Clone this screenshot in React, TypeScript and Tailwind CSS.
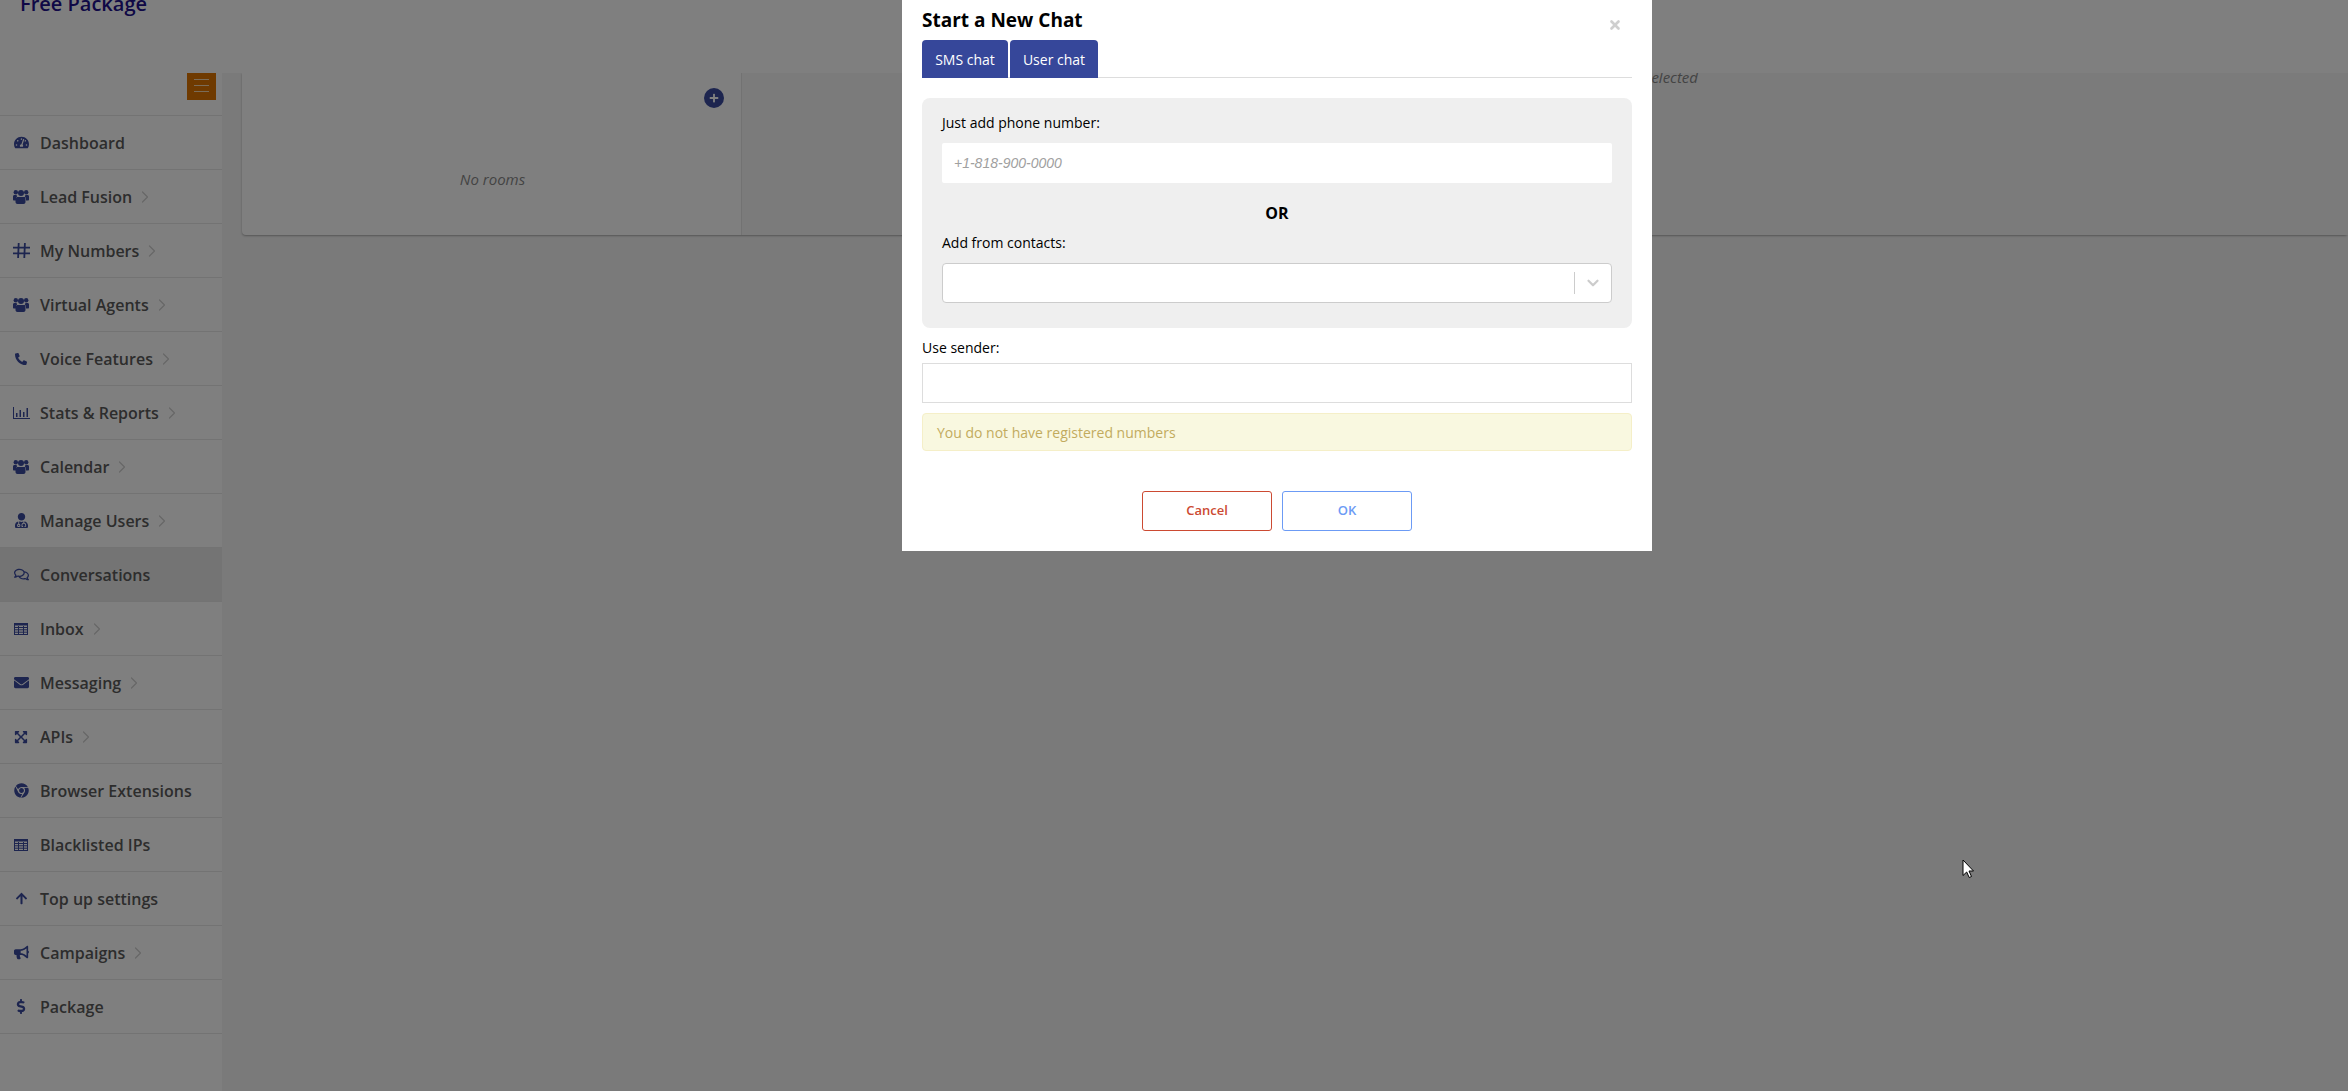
import React from "react";
import { FaTachometerAlt, FaPhoneAlt, FaUserMd, FaRegComments, FaEnvelope, FaExpandArrowsAlt, FaChrome, FaArrowUp, FaBullhorn, FaDollarSign, FaPlus } from "react-icons/fa";
import { ChevronRight, ChevronDown, X } from "lucide-react";

type IconProps = { className?: string };

const Bars = ({ className }: IconProps) => (
  <svg viewBox="0 0 17 12" className={className} fill="currentColor">
    <path d="M0 0h1v11h17v1H0z" />
    <path d="M3 6h1.500v4H3zM6.500 3h1.500v7H6.500zM10 5h1.500v5H10zM13.500 1h1.500v9h-1.500z" />
  </svg>
);

const People = ({ className }: IconProps) => (
  <svg viewBox="0 0 16 15" className={className} fill="currentColor">
    <circle cx="2.800" cy="3.200" r="2.200" />
    <circle cx="13.200" cy="3.200" r="2.200" />
    <circle cx="8" cy="4" r="3" />
    <path d="M0 7.500c0-1 .7-1.500 1.500-1.500h2.300c-.3.800 0 1.500.5 2-1 .3-1.300 1-1.300 2v1.500H1c-.6 0-1-.4-1-1z" />
    <path d="M16 7.500c0-1-.7-1.500-1.500-1.500h-2.300c.3.800 0 1.500-.5 2 1 .3 1.300 1 1.300 2v1.500H15c.6 0 1-.4 1-1z" />
    <path d="M4.800 8h6.400c.8 0 1.300.6 1.300 1.500V13c0 1.200-.8 2-2 2h-6c-1.200 0-2-.8-2-2V9.500C3.500 8.600 4 8 4.800 8z" />
  </svg>
);

const HashMark = ({ className }: IconProps) => (
  <svg viewBox="0 0 17 15" className={className} fill="currentColor">
    <path d="M4.800 0h1.800L6 15H4.200zM11 0h1.800l-.6 15h-1.800z" />
    <path d="M0 3.800h17v1.700H0zM0 9.500h17v1.700H0z" />
  </svg>
);

const Grid = ({ className }: IconProps) => (
  <svg viewBox="0 0 14 12" className={className} fill="none" stroke="currentColor" strokeWidth="1">
    <rect x="0.500" y="0.500" width="13" height="11" strokeWidth="1" />
    <path d="M0 1.500h14" strokeWidth="2" />
    <path d="M0 4.500h14M0 6.800h14M0 9.200h14M4.500 3v9M9.500 3v9" />
  </svg>
);

const items: [string, React.ComponentType<IconProps>, boolean, string][] = [
  ["Dashboard", FaTachometerAlt, false, "w-[15px] h-[15px]"],
  ["Lead Fusion", People, true, "w-[16px] h-[15px]"],
  ["My Numbers", HashMark, true, "w-[17px] h-[15px]"],
  ["Virtual Agents", People, true, "w-[16px] h-[15px]"],
  ["Voice Features", FaPhoneAlt, true, "w-[12px] h-[12px]"],
  ["Stats & Reports", Bars, true, "w-[17px] h-[12px]"],
  ["Calendar", People, true, "w-[16px] h-[15px]"],
  ["Manage Users", FaUserMd, true, "w-[13px] h-[15px]"],
  ["Conversations", FaRegComments, false, "w-[15px] h-[15px]"],
  ["Inbox", Grid, true, "w-[14px] h-[12px]"],
  ["Messaging", FaEnvelope, true, "w-[15px] h-[15px]"],
  ["APIs", FaExpandArrowsAlt, true, "w-[14px] h-[14px]"],
  ["Browser Extensions", FaChrome, false, "w-[15px] h-[15px]"],
  ["Blacklisted IPs", Grid, false, "w-[14px] h-[12px]"],
  ["Top up settings", FaArrowUp, false, "w-[13px] h-[13px]"],
  ["Campaigns", FaBullhorn, true, "w-[15px] h-[15px]"],
  ["Package", FaDollarSign, false, "w-[14px] h-[15px]"],
];

export default function App() {
  return (
    <div className="relative h-[1091px] w-[2348px] overflow-hidden bg-[#f4f4f4] font-['Open_Sans',sans-serif]">
      <header className="relative z-10 h-[73px] bg-white overflow-hidden">
        <div className="pl-5 -mt-[10px] text-[20px] leading-[27px] text-[#20108c] font-semibold">Free Package</div>
      </header>
      <div className="flex">
        <aside className="w-[222px] h-[1018px] bg-white shrink-0">
          <div className="flex justify-end pr-[6px] h-[43px] border-b border-[#e6e6e6]">
            <div className="w-[29px] h-[27px] bg-[#de7400] flex flex-col items-center justify-center gap-[5px] pb-[2px]">
              <span className="block w-[15px] h-px bg-[#f5d9b0]" />
              <span className="block w-[15px] h-px bg-[#f5d9b0]" />
              <span className="block w-[15px] h-px bg-[#f5d9b0]" />
            </div>
          </div>
          {items.map(([name, Icon, chev, size]) => (
            <div key={name} className={`flex items-center h-[54px] border-b border-[#e6e6e6] ${name === "Conversations" ? "bg-[#e8e8e8]" : ""}`}>
              <span className="w-[40px] flex justify-center pl-[2px] shrink-0 text-[#3a4a9f]">
                <Icon className={size} />
              </span>
              <span className="text-[16px] text-[#5a5a5a] font-semibold leading-none">{name}</span>
              {chev && <ChevronRight className="w-[20px] h-[20px] ml-[3px] text-[#cfcfcf]" strokeWidth={1.500} />}
            </div>
          ))}
        </aside>
        <main className="flex-1 pl-5">
          <div className="h-[162px] bg-white rounded-b-[4px] shadow-[0_1px_2px_rgba(0,0,0,0.3)] flex">
            <div className="w-[500px] border-r border-[#e4e4e4] relative flex items-center justify-center">
              <span className="text-[15px] italic text-[#888] mt-[51px] ml-[2px]">No rooms</span>
              <span className="absolute right-[17px] top-[15px] w-[20px] h-[20px] rounded-full bg-[#3a4a9f] text-white flex items-center justify-center">
                <FaPlus className="w-[10px] h-[10px]" />
              </span>
            </div>
            <div className="flex-1 bg-[#f6f6f6] flex justify-end pr-[650px]">
              <span className="text-[15px] italic text-[#888] -mt-[6px] leading-[20px] h-5">No chat selected</span>
            </div>
          </div>
        </main>
      </div>

      <div className="absolute inset-0 z-20 bg-black/50" />

      <div className="absolute z-30 left-[902px] top-0 w-[750px] h-[551px] bg-white px-5 text-black">
        <div className="relative h-[40px] flex items-center">
          <h2 className="text-[19px] font-bold leading-none">Start a New Chat</h2>
          <X className="absolute right-[10px] top-[18px] w-[14px] h-[14px] text-[#cfcfcf]" strokeWidth={4.500} />
        </div>
        <div className="flex gap-[2px] border-b border-[#dddddd] h-[38px]">
          <div className="w-[86px] h-[38px] bg-[#36479a] text-white rounded-t-[4px] text-[14px] flex items-center justify-center">SMS chat</div>
          <div className="w-[88px] h-[38px] bg-[#36479a] text-white rounded-t-[4px] text-[14px] flex items-center justify-center">User chat</div>
        </div>
        <div className="mt-5 h-[230px] bg-[#efefef] rounded-[8px] px-5 pt-[14px]">
          <div className="text-[14px] leading-[22px]">Just add phone number:</div>
          <div className="mt-[9px] h-[40px] bg-white rounded-[2px] flex items-center pl-3 text-[14px] italic text-[#a0a0a0] font-['Liberation_Sans',sans-serif]">+1-818-900-0000</div>
          <div className="mt-[19px] text-center text-[16px] font-bold leading-[22px]">OR</div>
          <div className="mt-[8px] text-[14px] leading-[22px]">Add from contacts:</div>
          <div className="mt-[9px] h-[40px] bg-white rounded-[4px] border border-[#cccccc] flex items-center justify-end">
            <span className="w-px h-[22px] bg-[#cccccc]" />
            <span className="w-[36px] flex justify-center"><ChevronDown className="w-[18px] h-[18px] text-[#cccccc]" strokeWidth={3} /></span>
          </div>
        </div>
        <div className="mt-[9px] text-[14px] leading-[22px]">Use sender:</div>
        <div className="mt-[4px] h-[40px] border border-[#dddddd]" />
        <div className="mt-[10px] h-[38px] bg-[#f9f8e0] border border-[#f5efc8] rounded-[4px] flex items-center pl-[14px] text-[14px] text-[#c2ab5e]">You do not have registered numbers</div>
        <div className="mt-10 flex justify-center gap-[10px]">
          <button className="w-[130px] h-[40px] border border-[#cc4a32] rounded-[3px] text-[13px] font-semibold text-[#cc4a32]">Cancel</button>
          <button className="w-[130px] h-[40px] border border-[#6c9bf5] rounded-[3px] text-[13px] font-semibold text-[#6c9bf5]">OK</button>
        </div>
      </div>

      <svg viewBox="0 0 12 19" className="absolute z-40 left-[1962px] top-[859px] w-[12px] h-[19px]">
        <path d="M1 1v15.500l3.700-3.500 2.500 5.500 2.300-1-2.500-5.500H11.500z" fill="#fff" stroke="#000" strokeWidth="1" />
      </svg>
    </div>
  );
}
